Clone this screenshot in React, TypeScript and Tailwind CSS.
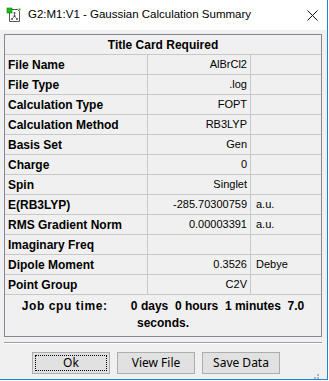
import React from "react";

const rows: { label: string; value: string; unit?: string }[] = [
  { label: "File Name", value: "AlBrCl2" },
  { label: "File Type", value: ".log" },
  { label: "Calculation Type", value: "FOPT" },
  { label: "Calculation Method", value: "RB3LYP" },
  { label: "Basis Set", value: "Gen" },
  { label: "Charge", value: "0" },
  { label: "Spin", value: "Singlet" },
  { label: "E(RB3LYP)", value: "-285.70300759", unit: "a.u." },
  { label: "RMS Gradient Norm", value: "0.00003391", unit: "a.u." },
  { label: "Imaginary Freq", value: "" },
  { label: "Dipole Moment", value: "0.3526", unit: "Debye" },
  { label: "Point Group", value: "C2V" },
];

const AppIcon = () => (
  <svg width="16" height="16" viewBox="0 0 16 16">
    <path d="M3.5 2.5h8l2 2v10h-10z" fill="#fff" stroke="#555" />
    <rect x="1" y="1" width="5" height="5" fill="#17c217" stroke="#0a7a0a" strokeWidth="0.6" />
    <rect x="12.5" y="1.5" width="2" height="2" fill="#17c217" />
    <g stroke="#777" strokeWidth="1">
      <line x1="8.5" y1="6" x2="8.5" y2="9" />
      <line x1="8.5" y1="9" x2="6" y2="12" />
      <line x1="8.5" y1="9" x2="11" y2="12" />
    </g>
    <circle cx="8.5" cy="6" r="1" fill="#555" />
    <circle cx="6" cy="12" r="1" fill="#555" />
    <circle cx="11" cy="12" r="1" fill="#555" />
    <circle cx="8.5" cy="9" r="1.1" fill="#555" />
  </svg>
);

const Btn = ({ label, focus }: { label: string; focus?: boolean }) => (
  <button className="w-[78px] h-[22px] bg-[#e1e1e1] border border-[#adadad] text-[12px] text-black p-[2px]">
    <span
      className={
        "flex h-full w-full items-center justify-center " +
        (focus ? "border border-dotted border-black" : "border border-transparent")
      }
    >
      {label}
    </span>
  </button>
);

export default function App() {
  return (
    <div
      className="w-[328px] h-[380px] bg-[#f0f0f0] border-r border-b border-[#1883d7] flex flex-col"
      style={{ fontFamily: '"Liberation Sans", Arial, sans-serif' }}
    >
      {/* title bar */}
      <div className="h-[30px] bg-white flex items-center pl-[6px] pr-[9px] shrink-0">
        <AppIcon />
        <span className="ml-[6px] text-[11.5px] text-black flex-1">
          G2:M1:V1 - Gaussian Calculation Summary
        </span>
        <svg width="11" height="11" viewBox="0 0 11 11" className="mt-[1px]">
          <path d="M0.5 0.5l10 10M10.5 0.5l-10 10" stroke="#111" strokeWidth="1" />
        </svg>
      </div>

      {/* body */}
      <div className="flex flex-col px-[4px] pt-[4px]">
        <div className="w-[318px] border border-[#828790] text-[11px] text-black">
          <div className="h-[20px] flex items-center justify-center font-bold text-[12px] border-b border-[#c8c8c8]">
            Title Card Required
          </div>
          {rows.map((r) => (
            <div
              key={r.label}
              className="grid grid-cols-[143px_103px_1fr] h-[20px] border-b border-[#c8c8c8]"
            >
              <div className="flex items-center pl-[3px] font-bold text-[12px] border-r border-[#c8c8c8]">
                {r.label}
              </div>
              <div className="flex items-center justify-end pr-[3px] border-r border-[#c8c8c8]">
                {r.value}
              </div>
              <div className="flex items-center pl-[5px]">{r.unit}</div>
            </div>
          ))}
          <div className="h-[41px] flex items-center justify-center pb-[2px]">
            <p className="text-center font-bold text-[12px] leading-[17px] whitespace-pre">
              <span className="tracking-[0.6px]">Job cpu time:</span>
              {"       0 days  0 hours  1 minutes  7.0\nseconds."}
            </p>
          </div>
        </div>

        <div className="mt-[5px] h-[2px] border-t border-[#a0a0a0] border-b border-b-white w-[318px]" />

        <div
          className="flex gap-[7px] pl-[28px] mt-[8px]"
          style={{ fontFamily: '"Noto Sans", "Open Sans", sans-serif' }}
        >
          <Btn label="Ok" focus />
          <Btn label="View File" />
          <Btn label="Save Data" />
        </div>
      </div>

      {/* size grip */}
      <div className="flex-1 flex items-end justify-end pr-[8px] pb-[6px]">
        <svg width="8" height="8" viewBox="0 0 8 8">
          <g fill="#b4b4b4">
            <rect x="6" y="0" width="2" height="2" />
            <rect x="3" y="3" width="2" height="2" />
            <rect x="6" y="3" width="2" height="2" />
            <rect x="0" y="6" width="2" height="2" />
            <rect x="3" y="6" width="2" height="2" />
            <rect x="6" y="6" width="2" height="2" />
          </g>
        </svg>
      </div>
    </div>
  );
}
